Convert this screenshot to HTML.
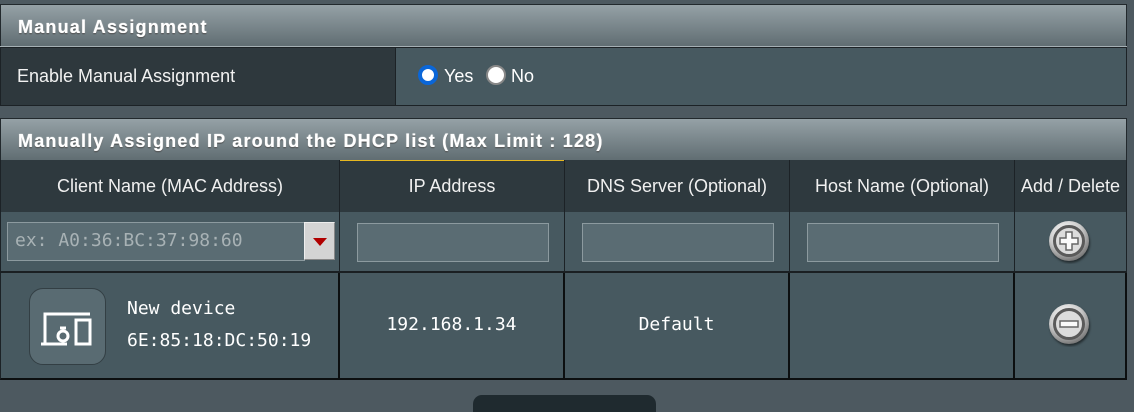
<!DOCTYPE html>
<html><head><style>
html,body{margin:0;width:1134px;height:412px;overflow:hidden}
body{background:#4d5960;position:relative;font-family:"Liberation Sans",Arial,sans-serif;color:#fff}
div{position:absolute;box-sizing:border-box}
.hdr{left:0;width:1127px;height:43px;border:1px solid #22292d;border-bottom:none;background:linear-gradient(#95a1a6,#5f6c71);font-weight:bold;font-size:18px;letter-spacing:1.2px;padding:12px 0 0 17px;text-shadow:0 0 1px #fff,0 1px 1px #333}
.mono{font-family:"DejaVu Sans Mono","Liberation Mono",monospace}
.th{top:160px;height:52px;background:#2e393e;border-right:1px solid #1c2226;font-size:18px;text-align:center;line-height:52px;color:#f0f0f0}
.c2{top:212px;height:61px;background:#475960;border-right:1px solid #1c2226;border-bottom:2px solid #1a1f22}
.c3{top:273px;height:107px;background:#475960;border-right:2px solid #0c0f10;border-bottom:2px solid #0c0f10}
.inp{top:11px;left:17px;width:192px;height:39px;background:#5a6c73;border:1px solid #8c9a9f}
</style></head><body>
<svg width="0" height="0" style="position:absolute"><defs>
<radialGradient id="g" cx="40%" cy="30%" r="70%"><stop offset="0" stop-color="#fff"/><stop offset=".6" stop-color="#c9c9c9"/><stop offset="1" stop-color="#7a7a7a"/></radialGradient>
</defs></svg>
<div class="hdr" style="top:4px">Manual Assignment</div>
<div style="left:0;top:46px;width:1127px;height:1px;background:#a5b0b4"></div>
<div style="left:0;top:47px;width:396px;height:59px;background:#2e383d;border:1px solid #1c2226;font-size:18px;padding:18px 0 0 16px;color:#f2f2f2">Enable Manual Assignment</div>
<div style="left:396px;top:47px;width:731px;height:59px;background:#475960;border:1px solid #1c2226;border-left:none"></div>
<div style="left:418px;top:65px;width:20px;height:20px;border-radius:50%;background:#fff;border:4px solid #0a66d8"></div>
<div style="left:444px;top:66px;font-size:18px">Yes</div>
<div style="left:486px;top:65px;width:20px;height:20px;border-radius:50%;background:#fff;border:2px solid #888"></div>
<div style="left:511px;top:66px;font-size:18px">No</div>

<div class="hdr" style="top:118px">Manually Assigned IP around the DHCP list (Max Limit : 128)</div>
<div style="left:0;top:160px;width:1127px;height:1px;background:#22292d"></div>
<div class="th" style="left:0;width:340px;border-left:1px solid #1c2226">Client Name (MAC Address)</div>
<div class="th" style="left:340px;width:225px">IP Address</div>
<div style="left:340px;top:160px;width:224px;height:1px;background:#e6b820"></div>
<div class="th" style="left:565px;width:225px">DNS Server (Optional)</div>
<div class="th" style="left:790px;width:225px">Host Name (Optional)</div>
<div class="th" style="left:1015px;width:112px">Add / Delete</div>

<div class="c2" style="left:0;width:340px;border-left:1px solid #1c2226">
 <div style="left:6px;top:10px;width:298px;height:39px;background:#5a6c73;border:1px solid #8c9a9f;font-family:'DejaVu Sans Mono',monospace;font-size:18px;color:#a8b2b5;padding:7px 0 0 7px">ex: A0:36:BC:37:98:60</div>
 <div style="left:303px;top:10px;width:31px;height:38px;background:#d4d4d4;border:1px solid #eee;border-right-color:#888;border-bottom-color:#888"><div style="left:8px;top:15px;width:0;height:0;border-left:7px solid transparent;border-right:7px solid transparent;border-top:8px solid #b00000"></div></div>
</div>
<div class="c2" style="left:340px;width:225px"><div class="inp"></div></div>
<div class="c2" style="left:565px;width:225px"><div class="inp"></div></div>
<div class="c2" style="left:790px;width:225px"><div class="inp"></div></div>
<div class="c2" style="left:1015px;width:112px">
 <svg style="position:absolute;left:33px;top:8px" width="44" height="44" viewBox="0 0 44 44">
  <circle cx="21" cy="21" r="20" fill="url(#g)" style="filter:drop-shadow(1px 2px 1px rgba(0,0,0,.5))"/>
  <circle cx="21" cy="21" r="14.5" fill="#dcdcdc" stroke="#5a5a5a" stroke-width="3"/>
  <path d="M18 12 h6 v6 h6 v6 h-6 v6 h-6 v-6 h-6 v-6 h6z" fill="#fafafa" stroke="#666" stroke-width="1.5"/>
 </svg>
</div>

<div class="c3" style="left:0;width:340px;border-left:1px solid #1c2226">
 <div style="left:28px;top:15px;width:77px;height:77px;border-radius:14px;background:#596b72;border:1px solid #333f44">
  <svg width="77" height="77" viewBox="0 0 77 77" style="position:absolute;left:-1px;top:-1px" fill="none" stroke="#fff" stroke-width="3">
   <path d="M16 56 V26 H61"/><path d="M12 56 H30"/><circle cx="34" cy="48" r="5"/><path d="M31 40 h6 M30 56 h8"/><rect x="47" y="32" width="14" height="24"/>
  </svg>
 </div>
 <div class="mono" style="left:126px;top:25px;font-size:18px">New device</div>
 <div class="mono" style="left:126px;top:57px;font-size:18px">6E:85:18:DC:50:19</div>
</div>
<div class="c3 mono" style="left:340px;width:225px;text-align:center;line-height:104px;font-size:18px">192.168.1.34</div>
<div class="c3 mono" style="left:565px;width:225px;text-align:center;line-height:104px;font-size:18px">Default</div>
<div class="c3" style="left:790px;width:225px"></div>
<div class="c3" style="left:1015px;width:112px">
 <svg style="position:absolute;left:33px;top:30px" width="44" height="44" viewBox="0 0 44 44">
  <circle cx="21" cy="21" r="20" fill="url(#g)" style="filter:drop-shadow(1px 2px 1px rgba(0,0,0,.5))"/>
  <circle cx="21" cy="21" r="14.5" fill="#dcdcdc" stroke="#5a5a5a" stroke-width="3"/>
  <path d="M12 18 h18 v6 h-18z" fill="#fafafa" stroke="#666" stroke-width="1.5"/>
 </svg>
</div>

<div style="left:473px;top:395px;width:183px;height:30px;background:#1f2a2f;border-radius:9px"></div>
</body></html>
